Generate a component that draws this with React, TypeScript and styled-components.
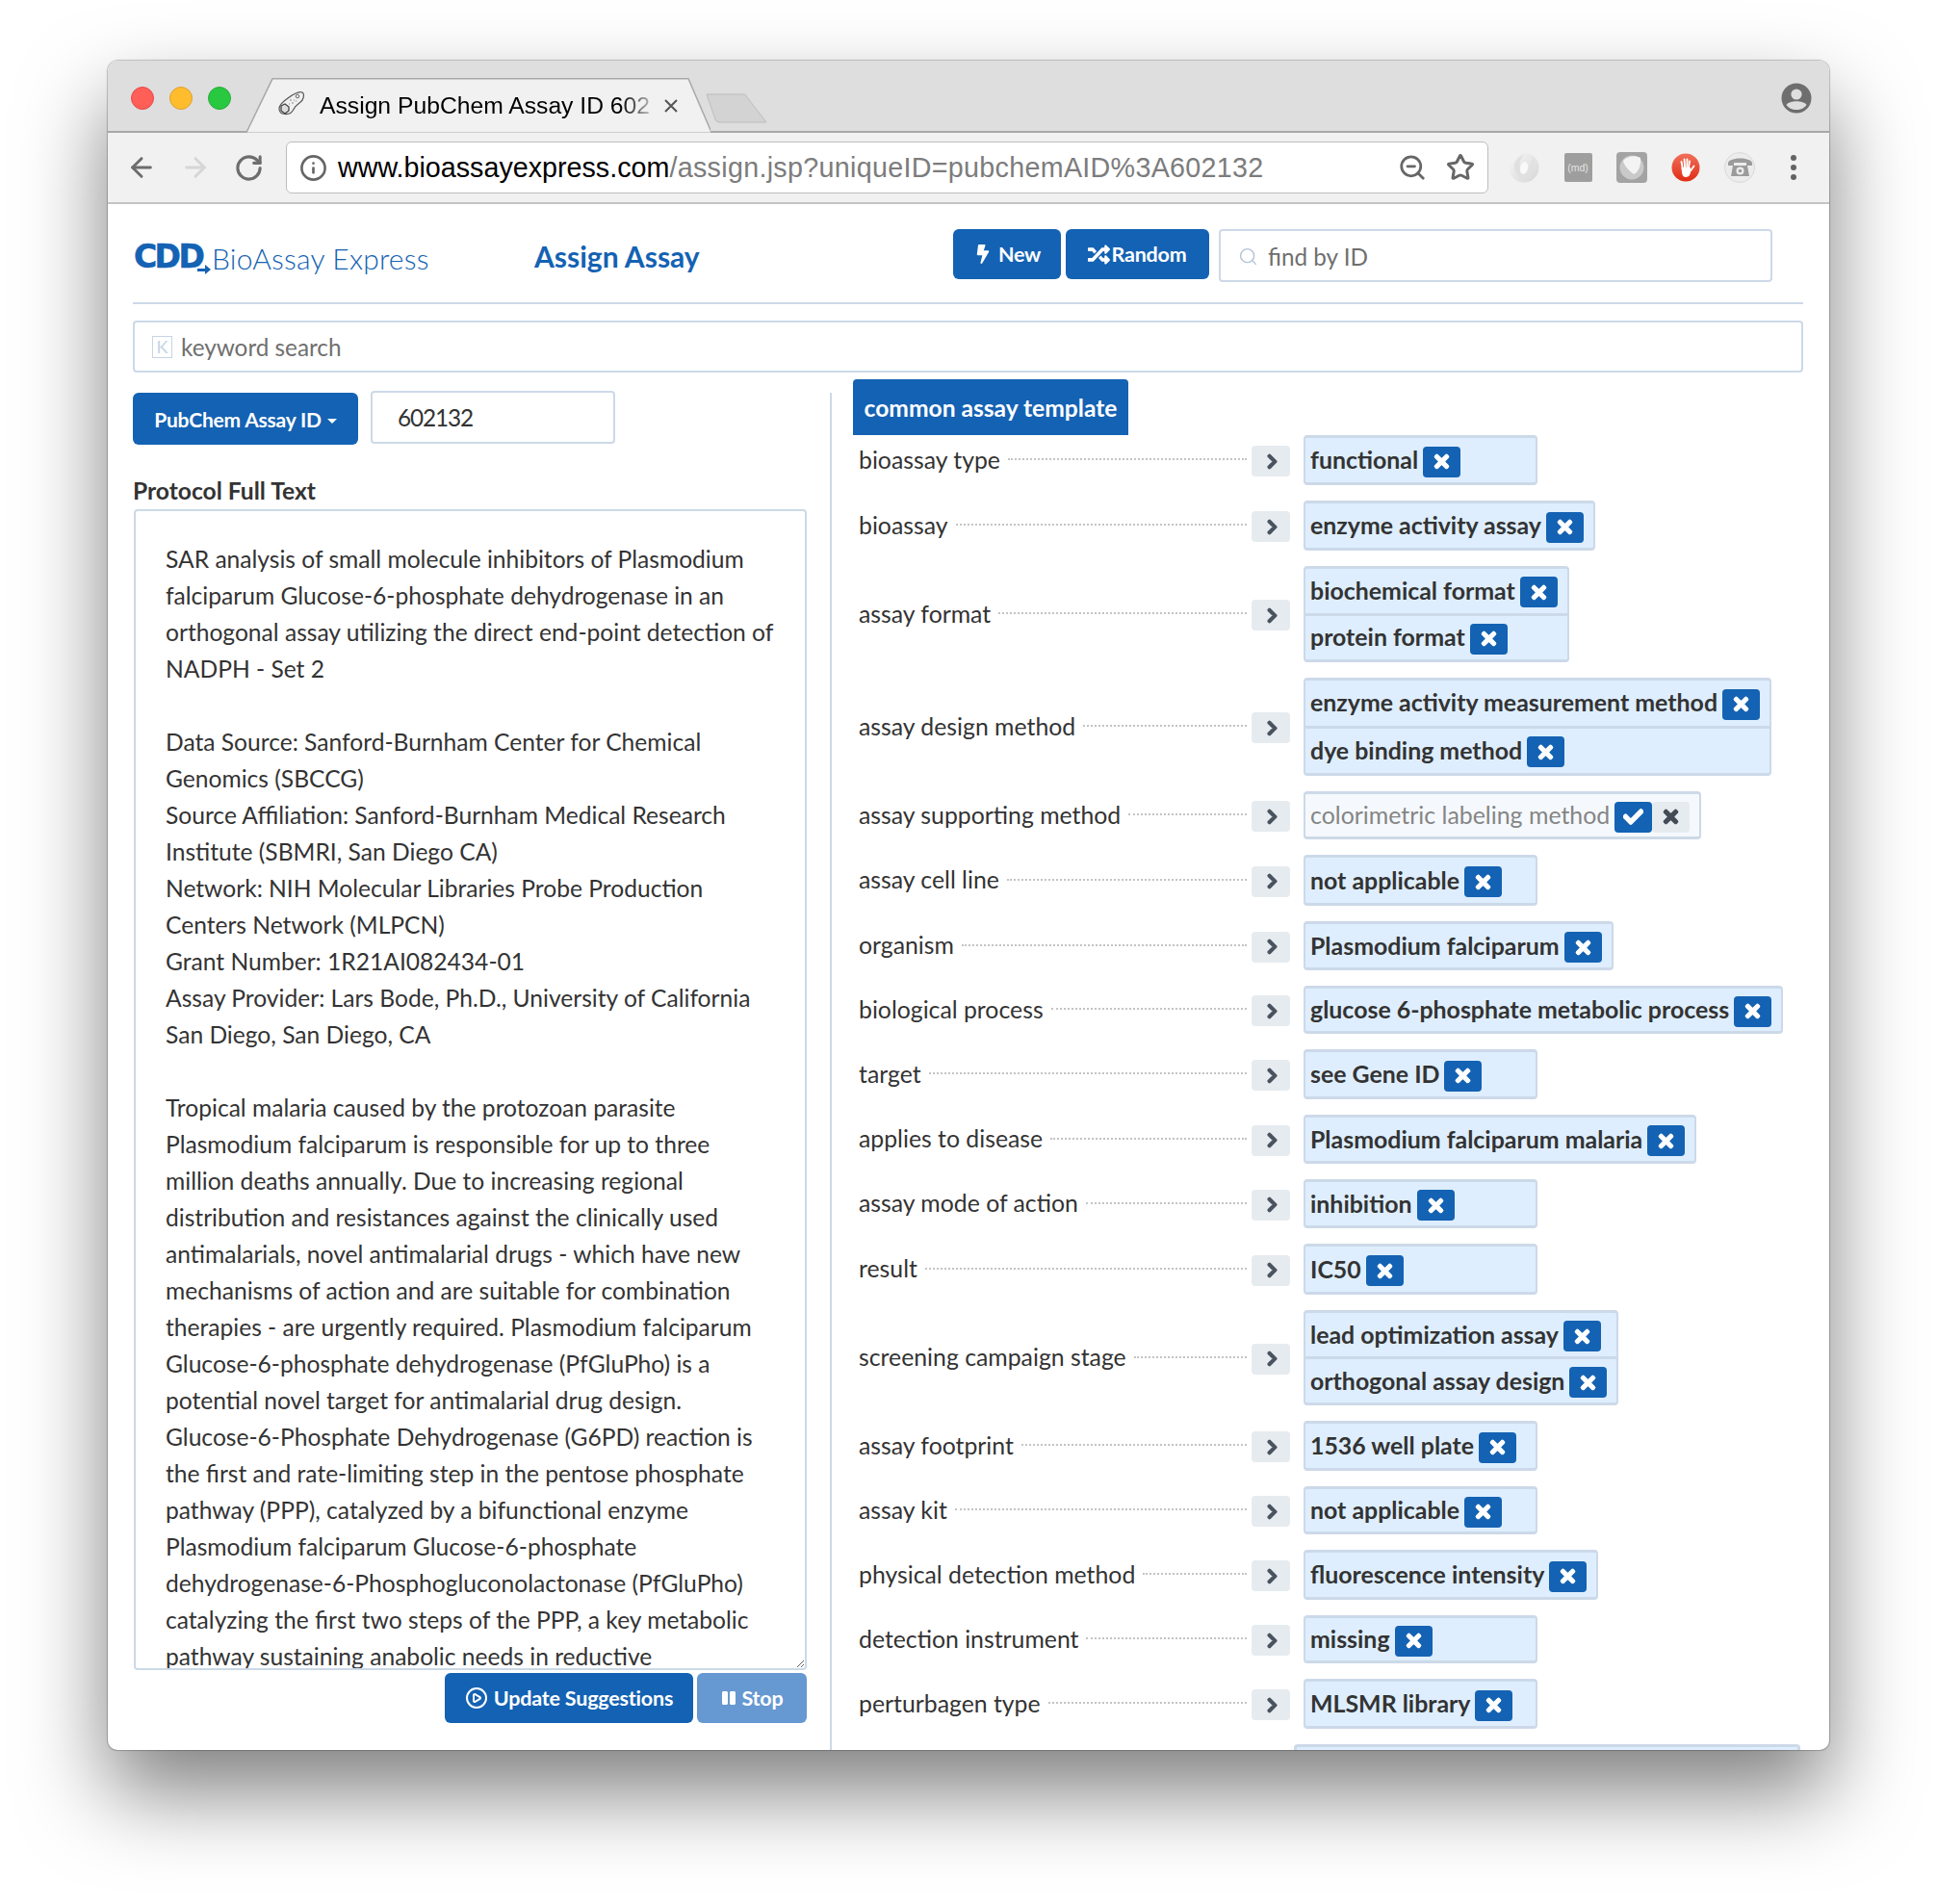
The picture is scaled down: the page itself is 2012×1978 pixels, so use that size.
import React from "react";
import styled, { createGlobalStyle } from "styled-components";
import { ArrowLeft, ArrowRight, RotateCw, Info, ZoomOut, Star, Search, CirclePlay } from "lucide-react";
import { FaBolt, FaRandom, FaTimes, FaCheck, FaChevronRight, FaPause } from "react-icons/fa";

const BLUE = "#1462b3";
const LINE = "#ccd9e8";
const FONT = `"Lato", "Noto Sans", sans-serif`;

const Global = createGlobalStyle`
  html, body { margin: 0; padding: 0; background: #fff; }
  * { box-sizing: border-box; }
  body { font-family: ${FONT}; color: #333; }
`;

const Page = styled.div`
  width: 2012px;
  height: 1978px;
  padding: 63px 112px 0;
  overflow: hidden;
`;
const Win = styled.div`
  width: 1788px;
  height: 1755px;
  border-radius: 11px 11px 10px 10px;
  box-shadow: 0 44px 88px rgba(0,0,0,.5), 0 0 1px 1px rgba(0,0,0,.22);
  overflow: hidden;
  background: #fff;
  display: flex;
  flex-direction: column;
`;
const TabStrip = styled.div`
  height: 75px;
  flex: none;
  background: #dedede;
  border-bottom: 2px solid #a8a8a8;
  display: flex;
  align-items: flex-end;
  position: relative;
  padding-left: 24px;
`;
const Lights = styled.div`
  display: flex;
  gap: 16px;
  align-self: flex-start;
  margin-top: 27px;
`;
const Light = styled.span<{ $c: string; $b: string }>`
  width: 24px;
  height: 24px;
  border-radius: 50%;
  background: ${p => p.$c};
  border: 1px solid ${p => p.$b};
`;
const Tab = styled.div`
  position: relative;
  width: 483px;
  height: 57px;
  margin-left: 15px;
  margin-bottom: -2px;
  display: flex;
  align-items: center;
  padding-left: 77px;
  font: 24.7px "Liberation Sans", Arial, sans-serif;
  color: #000;
`;
const TabShape = styled.svg`
  position: absolute;
  left: 0;
  top: 0;
`;
const TabFav = styled.svg`
  position: absolute;
  left: 33px;
  top: 12px;
`;
const TabTitle = styled.span`
  position: relative;
  width: 347px;
  white-space: nowrap;
  -webkit-mask-image: linear-gradient(90deg, #000 90%, rgba(0,0,0,.15) 100%);
  mask-image: linear-gradient(90deg, #000 90%, rgba(0,0,0,.15) 100%);
`;
const TabClose = styled.span`
  position: relative;
  margin-left: 10px;
  display: flex;
  color: #555;
`;
const NewTab = styled.svg`
  margin-left: -5px;
  margin-bottom: 7px;
`;
const Profile = styled.svg`
  position: absolute;
  right: 18px;
  top: 23px;
`;
const Toolbar = styled.div`
  height: 74px;
  flex: none;
  background: #f1f1f1;
  border-bottom: 2px solid #c4c4c4;
  display: flex;
  align-items: center;
  padding: 0 0 0 19px;
`;
const NavIcon = styled.span<{ $c: string; $ml: number }>`
  display: flex;
  color: ${p => p.$c};
  margin-left: ${p => p.$ml}px;
`;
const Omni = styled.div`
  margin-left: 23px;
  width: 1249px;
  height: 54px;
  background: #fff;
  border: 1.5px solid #bdbdbd;
  border-radius: 6px;
  display: flex;
  align-items: center;
  padding: 0 13px 0 13px;
  font: 28.7px "Liberation Sans", Arial, sans-serif;
  color: #000;
`;
const Url = styled.div`
  margin-left: 11px;
  flex: 1;
  white-space: nowrap;
  span { color: #7c7c7c; letter-spacing: .3px; }
`;
const OmniIcon = styled.span<{ $ml: number }>`
  display: flex;
  color: #666;
  margin-left: ${p => p.$ml}px;
`;
const Ext = styled.div`
  display: grid;
  grid-template-columns: repeat(6, 56px);
  justify-items: center;
  align-items: center;
  margin-left: 9px;
`;
const MdBadge = styled.span`
  width: 29px;
  height: 30px;
  border-radius: 2px;
  background: #9e9e9e;
  color: #e4e4e4;
  font: 10.5px "Liberation Sans", Arial, sans-serif;
  display: flex;
  align-items: center;
  justify-content: center;
`;
const Dots = styled.div`
  display: flex;
  flex-direction: column;
  gap: 4px;
  span { width: 6px; height: 6px; border-radius: 50%; background: #636363; }
`;
const Content = styled.div`
  flex: 1;
  min-height: 0;
  overflow: hidden;
  padding: 0 27px 0 26px;
`;
const Header = styled.header`
  height: 104px;
  border-bottom: 2px solid ${LINE};
  display: flex;
  align-items: flex-start;
  padding-top: 26px;
`;
const Logo = styled.div`
  width: 298px;
  flex: none;
  margin-top: 13px;
  display: flex;
  align-items: center;
  color: ${BLUE};
  position: relative;
  height: 34px;
`;
const LogoMark = styled.span`
  font: 700 33px "DejaVu Sans", sans-serif;
  letter-spacing: -2.6px;
  -webkit-text-stroke: .6px ${BLUE};
  width: 82px;
  flex: none;
  padding-left: 1px;
  margin-top: -3px;
`;
const LogoText = styled.span`
  font: 300 30px ${FONT};
  letter-spacing: .2px;
  white-space: nowrap;
  flex: none;
`;
const LogoArrow = styled.svg`
  position: absolute;
  left: 67px;
  top: 23px;
`;
const PageTitle = styled.h1`
  margin: 8px 0 0 119px;
  width: 435px;
  flex: none;
  font: 700 30px/40px ${FONT};
  color: ${BLUE};
`;
const Btn = styled.button<{ $w: number; $h?: number; $faded?: boolean; $fs?: number; $gap?: number }>`
  width: ${p => p.$w}px;
  height: ${p => p.$h ?? 52}px;
  flex: none;
  background: ${p => (p.$faded ? "#6698d1" : BLUE)};
  color: #fff;
  border: none;
  border-radius: 6px;
  font: 700 ${p => p.$fs ?? 21.5}px ${FONT};
  letter-spacing: -.2px;
  display: flex;
  align-items: center;
  justify-content: center;
  gap: ${p => p.$gap ?? 6}px;
  padding: 0;
  white-space: nowrap;
`;
const BtnGroup = styled.div`
  display: flex;
  gap: 5px;
`;
const Field = styled.div<{ $w?: number; $h?: number }>`
  width: ${p => (p.$w ? `${p.$w}px` : "auto")};
  height: ${p => p.$h ?? 54}px;
  border: 2px solid ${LINE};
  border-radius: 4px;
  background: #fff;
  display: flex;
  align-items: center;
  font-size: 24.3px;
  color: #6f6f6f;
`;
const FindField = styled(Field)`
  margin-left: 10px;
  padding: 2px 0 0 18px;
  gap: 10px;
  svg { color: #b3c3d6; }
`;
const KeywordField = styled(Field)`
  margin-top: 17px;
  padding-left: 18px;
  gap: 9px;
`;
const KBox = styled.span`
  width: 21px;
  height: 23px;
  border: 1.5px solid #c6d5e6;
  color: #c6d5e6;
  font: 18px/20px ${FONT};
  text-align: center;
`;
const Main = styled.div`
  margin-top: 21px;
  display: grid;
  grid-template-columns: 724px 1fr;
`;
const Left = styled.section`
  display: flex;
  flex-direction: column;
`;
const IdRow = styled.div`
  display: flex;
  gap: 13px;
  align-items: flex-start;
`;
const Caret = styled.span`
  display: inline-block;
  border-top: 5px solid #fff;
  border-left: 5px solid transparent;
  border-right: 5px solid transparent;
  margin-top: 4px;
`;
const IdField = styled(Field)`
  margin-top: -2px;
  padding-left: 26px;
  color: #333;
  letter-spacing: -1.1px;
`;
const SectionTitle = styled.div`
  font: 700 24.6px/30px ${FONT};
  margin-top: 33px;
`;
const Protocol = styled.textarea`
  margin: 4px 0 0 1px;
  width: 699px;
  height: 1206px;
  border: 2px solid ${LINE};
  border-radius: 4px;
  padding: 31px 0 0 31px;
  font: 24.6px/38px ${FONT};
  color: #333;
  white-space: pre;
  overflow: hidden;
  resize: both;
  outline: none;
  display: block;
`;
const Actions = styled.div`
  display: flex;
  justify-content: flex-end;
  gap: 4px;
  margin-top: 3px;
  width: 700px;
`;
const Right = styled.section`
  border-left: 2px solid ${LINE};
  padding-left: 22px;
  display: flex;
  flex-direction: column;
  height: 1500px;
`;
const TemplateTab = styled.div`
  margin-top: -14px;
  width: 286px;
  height: 58px;
  background: ${BLUE};
  color: #fff;
  border-radius: 4px 4px 0 0;
  font: 700 24.6px/60px ${FONT};
  text-align: center;
  white-space: nowrap;
`;
const Rows = styled.div`
  display: flex;
  flex-direction: column;
  gap: 16px;
`;
const Row = styled.div<{ $h: number }>`
  height: ${p => p.$h}px;
  display: flex;
  align-items: center;
  padding-left: 6px;
`;
const Label = styled.div`
  width: 403px;
  display: flex;
  align-items: center;
  gap: 8px;
  font-size: 24.8px;
  white-space: nowrap;
  margin-top: -2px;
`;
const Leader = styled.span`
  flex: 1;
  border-bottom: 2px dotted #c4c4c4;
`;
const Expand = styled.span`
  width: 40px;
  height: 32px;
  margin-left: 5px;
  margin-top: 2px;
  flex: none;
  background: #e6ebf0;
  border-radius: 4px;
  color: #4a5460;
  display: flex;
  align-items: center;
  justify-content: center;
  font-size: 17px;
  padding-left: 2px;
  svg { stroke: currentColor; stroke-width: 45px; }
`;
const Values = styled.div`
  margin-left: 14px;
  min-width: 243px;
  height: 100%;
  background: #deeefe;
  border: 2px solid ${LINE};
  border-bottom-width: 3px;
  border-top-width: 3px;
  border-radius: 4px;
  display: flex;
  flex-direction: column;
`;
const Value = styled.div<{ $suggested?: boolean }>`
  flex: 1;
  display: flex;
  align-items: center;
  padding: 0 10px 2px 5px;
  gap: 5px;
  font: 700 24.9px ${FONT};
  white-space: nowrap;
  color: ${p => (p.$suggested ? "#858585" : "#333")};
  font-weight: ${p => (p.$suggested ? 400 : 700)};
  & + & { border-top: 3px solid ${LINE}; }
`;
const SuggestedValues = styled(Values)`
  background: #f5f9fd;
`;
const Chip = styled.span<{ $plain?: boolean }>`
  width: 39px;
  height: 32px;
  margin-top: 5px;
  border-radius: 4px;
  background: ${p => (p.$plain ? "#e6ebf0" : BLUE)};
  color: ${p => (p.$plain ? "#444c55" : "#fff")};
  display: flex;
  align-items: center;
  justify-content: center;
  font-size: 21px;
  flex: none;
  svg { stroke: currentColor; stroke-width: 30px; }
`;
const ChipPair = styled.span`
  display: flex;
`;
const NextGroup = styled.div`
  margin-left: 458px;
  width: 526px;
  height: 60px;
  background: #deeefe;
  border: 3px solid ${LINE};
  border-radius: 4px;
  position: relative;
`;

const protocol = `SAR analysis of small molecule inhibitors of Plasmodium
falciparum Glucose-6-phosphate dehydrogenase in an
orthogonal assay utilizing the direct end-point detection of
NADPH - Set 2

Data Source: Sanford-Burnham Center for Chemical
Genomics (SBCCG)
Source Affiliation: Sanford-Burnham Medical Research
Institute (SBMRI, San Diego CA)
Network: NIH Molecular Libraries Probe Production
Centers Network (MLPCN)
Grant Number: 1R21AI082434-01
Assay Provider: Lars Bode, Ph.D., University of California
San Diego, San Diego, CA

Tropical malaria caused by the protozoan parasite
Plasmodium falciparum is responsible for up to three
million deaths annually. Due to increasing regional
distribution and resistances against the clinically used
antimalarials, novel antimalarial drugs - which have new
mechanisms of action and are suitable for combination
therapies - are urgently required. Plasmodium falciparum
Glucose-6-phosphate dehydrogenase (PfGluPho) is a
potential novel target for antimalarial drug design.
Glucose-6-Phosphate Dehydrogenase (G6PD) reaction is
the first and rate-limiting step in the pentose phosphate
pathway (PPP), catalyzed by a bifunctional enzyme
Plasmodium falciparum Glucose-6-phosphate
dehydrogenase-6-Phosphogluconolactonase (PfGluPho)
catalyzing the first two steps of the PPP, a key metabolic
pathway sustaining anabolic needs in reductive`;

type RowData = { label: string; h: number; values: string[]; suggested?: boolean };
const rows: RowData[] = [
  { label: "bioassay type", h: 52, values: ["functional"] },
  { label: "bioassay", h: 52, values: ["enzyme activity assay"] },
  { label: "assay format", h: 100, values: ["biochemical format", "protein format"] },
  { label: "assay design method", h: 102, values: ["enzyme activity measurement method", "dye binding method"] },
  { label: "assay supporting method", h: 50, values: ["colorimetric labeling method"], suggested: true },
  { label: "assay cell line", h: 53, values: ["not applicable"] },
  { label: "organism", h: 51, values: ["Plasmodium falciparum"] },
  { label: "biological process", h: 50, values: ["glucose 6-phosphate metabolic process"] },
  { label: "target", h: 52, values: ["see Gene ID"] },
  { label: "applies to disease", h: 51, values: ["Plasmodium falciparum malaria"] },
  { label: "assay mode of action", h: 51, values: ["inhibition"] },
  { label: "result", h: 53, values: ["IC50"] },
  { label: "screening campaign stage", h: 99, values: ["lead optimization assay", "orthogonal assay design"] },
  { label: "assay footprint", h: 52, values: ["1536 well plate"] },
  { label: "assay kit", h: 50, values: ["not applicable"] },
  { label: "physical detection method", h: 52, values: ["fluorescence intensity"] },
  { label: "detection instrument", h: 50, values: ["missing"] },
  { label: "perturbagen type", h: 52, values: ["MLSMR library"] },
];

const Ring = () => (
  <svg width="32" height="32" viewBox="0 0 32 32">
    <defs>
      <linearGradient id="rg" x1="0" y1="0" x2="1" y2="1">
        <stop offset="0" stopColor="#f7f7f7" />
        <stop offset="1" stopColor="#d6d6d6" />
      </linearGradient>
    </defs>
    <circle cx="16" cy="16" r="15.5" fill="url(#rg)" />
    <path d="M25 4c3 5 2 18-9 26C11 28 5 21 6 13c1-5 5-9 10-10-4 4-6 10-3 16 1 3 3 4 4 3 4-2 8-10 8-18z" fill="#e0e0e0" />
    <ellipse cx="16" cy="16.5" rx="4" ry="6.5" fill="#f9f9f9" transform="rotate(12 16 16.5)" />
  </svg>
);
const Shield = () => (
  <svg width="32" height="32" viewBox="0 0 32 32">
    <rect width="32" height="32" rx="4" fill="#a3a3a3" />
    <circle cx="16" cy="16" r="12.5" fill="#c9c9c9" />
    <path d="M7 9c4-5 13-6 18-3 1 7-2 15-7 17-3-2-10-8-11-14z" fill="#f3f3f3" />
  </svg>
);
const Hand = () => (
  <svg width="30" height="30" viewBox="0 0 30 30">
    <defs>
      <linearGradient id="rd" x1="0" y1="0" x2="0" y2="1">
        <stop offset="0" stopColor="#f0705a" />
        <stop offset="1" stopColor="#e02c14" />
      </linearGradient>
    </defs>
    <circle cx="15" cy="15" r="14.5" fill="url(#rd)" />
    <g stroke="#fff" strokeWidth="1.9" strokeLinecap="round" fill="none">
      <path d="M10.5 9l1.3 7" />
      <path d="M13.5 6.5l.6 8.5" />
      <path d="M16.5 6.5l-.2 8.5" />
      <path d="M19 8.5l-1 7" />
      <path d="M23.5 13.5l-3.5 5" />
    </g>
    <path d="M10.5 15h9.5v4c0 3-1.5 6-5 6s-4-3-4.5-10z" fill="#fff" />
  </svg>
);
const Phone = () => (
  <svg width="32" height="32" viewBox="0 0 32 32">
    <circle cx="16" cy="16" r="15.5" fill="#ececec" stroke="#d8d8d8" />
    <path d="M4 11c2-6 23-6 25 0v3h-6v-3H10v3H4z" fill="#9b9b9b" />
    <path d="M9 14h15l2 11H7z" fill="#9b9b9b" />
    <circle cx="16.5" cy="19.5" r="4" fill="#ececec" />
    <circle cx="16.5" cy="19.5" r="1.8" fill="#9b9b9b" />
  </svg>
);

export default function App() {
  return (
    <Page>
      <Global />
      <Win>
        <TabStrip>
          <Lights>
            <Light $c="#ff5f57" $b="#e5484a" />
            <Light $c="#ffbd2e" $b="#dea032" />
            <Light $c="#28c840" $b="#2aac3c" />
          </Lights>
          <Tab>
            <TabShape width="483" height="57" viewBox="0 0 483 57">
              <path d="M0 56.5h1L28 .8h432l24 55.7" fill="#f1f1f1" stroke="#a8a8a8" strokeWidth="1.5" />
            </TabShape>
            <TabFav width="30" height="30" viewBox="0 0 30 30">
              <path d="M2 20c0-5 5-8 9-11 4-3 11-8 15-6 3 2 1 9-3 11-3 2-5 4-7 8-3 5-14 5-14-2z" fill="#f0f0f0" stroke="#555" strokeWidth="1.2" />
              <path d="M4 17l4-2 4 3v4l-4 3-4-3z" fill="#ddd" stroke="#444" strokeWidth="1.3" />
              <circle cx="21" cy="7" r="1.8" fill="none" stroke="#666" />
              <path d="M13 11h2M17 11h1M15 14h2M19 12h1M12 15h1" stroke="#aaa" strokeWidth="1.3" />
            </TabFav>
            <TabTitle>Assign PubChem Assay ID 602</TabTitle>
            <TabClose>
              <svg width="16" height="16" viewBox="0 0 16 16"><path d="M2 2l12 12M14 2L2 14" stroke="#555" strokeWidth="2" /></svg>
            </TabClose>
          </Tab>
          <NewTab width="65" height="32" viewBox="0 0 65 32">
            <path d="M1 1h38q3 0 4 3l20 26H14q-3 0-4-3z" fill="#d3d3d3" stroke="#bcbcbc" />
          </NewTab>
          <Profile width="32" height="32" viewBox="0 0 32 32">
            <circle cx="16" cy="16" r="15.5" fill="#6e6e6e" />
            <circle cx="16" cy="12" r="5.6" fill="#dedede" />
            <path d="M5.5 23c3-5 18-5 21 0-2 3-6 5-10.5 5s-8.5-2-10.5-5z" fill="#dedede" />
          </Profile>
        </TabStrip>
        <Toolbar>
          <NavIcon $c="#6d6d6d" $ml={0}><ArrowLeft size={32} strokeWidth={2.2} /></NavIcon>
          <NavIcon $c="#d6d6d6" $ml={24}><ArrowRight size={32} strokeWidth={2.2} /></NavIcon>
          <NavIcon $c="#6d6d6d" $ml={24}><RotateCw size={31} strokeWidth={2.4} /></NavIcon>
          <Omni>
            <NavIcon $c="#666" $ml={0}><Info size={29} strokeWidth={2.2} /></NavIcon>
            <Url>www.bioassayexpress.com<span>/assign.jsp?uniqueID=pubchemAID%3A602132</span></Url>
            <OmniIcon $ml={0}><ZoomOut size={30} strokeWidth={2.2} /></OmniIcon>
            <OmniIcon $ml={20}><Star size={30} strokeWidth={2.4} /></OmniIcon>
          </Omni>
          <Ext>
            <Ring />
            <MdBadge>(md)</MdBadge>
            <Shield />
            <Hand />
            <Phone />
            <Dots><span /><span /><span /></Dots>
          </Ext>
        </Toolbar>
        <Content>
          <Header>
            <Logo>
              <LogoMark>CDD</LogoMark>
              <LogoArrow width="14" height="12" viewBox="0 0 14 12"><path d="M0 5h8V1l6 5-6 5V8H0z" fill={BLUE} /></LogoArrow>
              <LogoText>BioAssay Express</LogoText>
            </Logo>
            <PageTitle>Assign Assay</PageTitle>
            <BtnGroup>
              <Btn $w={112}><FaBolt size={20} />New</Btn>
              <Btn $w={149} $gap={1}><FaRandom size={23} />Random</Btn>
            </BtnGroup>
            <FindField $w={575} $h={55}>
              <Search size={21} strokeWidth={1.6} />find by ID
            </FindField>
          </Header>
          <KeywordField>
            <KBox>K</KBox>keyword search
          </KeywordField>
          <Main>
            <Left>
              <IdRow>
                <Btn $w={234} $h={54} $fs={21}>PubChem Assay ID <Caret /></Btn>
                <IdField $w={254} $h={55}>602132</IdField>
              </IdRow>
              <SectionTitle>Protocol Full Text</SectionTitle>
              <Protocol readOnly value={protocol} />
              <Actions>
                <Btn $w={258}><CirclePlay size={24} />Update Suggestions</Btn>
                <Btn $w={114} $faded><FaPause size={16} />Stop</Btn>
              </Actions>
            </Left>
            <Right>
              <TemplateTab>common assay template</TemplateTab>
              <Rows>
                {rows.map(r => {
                  const Box = r.suggested ? SuggestedValues : Values;
                  return (
                    <Row key={r.label} $h={r.h}>
                      <Label>{r.label}<Leader /></Label>
                      <Expand><FaChevronRight /></Expand>
                      <Box>
                        {r.values.map(v => (
                          <Value key={v} $suggested={r.suggested}>
                            {v}
                            {r.suggested ? (
                              <ChipPair>
                                <Chip><FaCheck /></Chip>
                                <Chip $plain><FaTimes /></Chip>
                              </ChipPair>
                            ) : (
                              <Chip><FaTimes /></Chip>
                            )}
                          </Value>
                        ))}
                      </Box>
                    </Row>
                  );
                })}
                <NextGroup />
              </Rows>
            </Right>
          </Main>
        </Content>
      </Win>
    </Page>
  );
}
